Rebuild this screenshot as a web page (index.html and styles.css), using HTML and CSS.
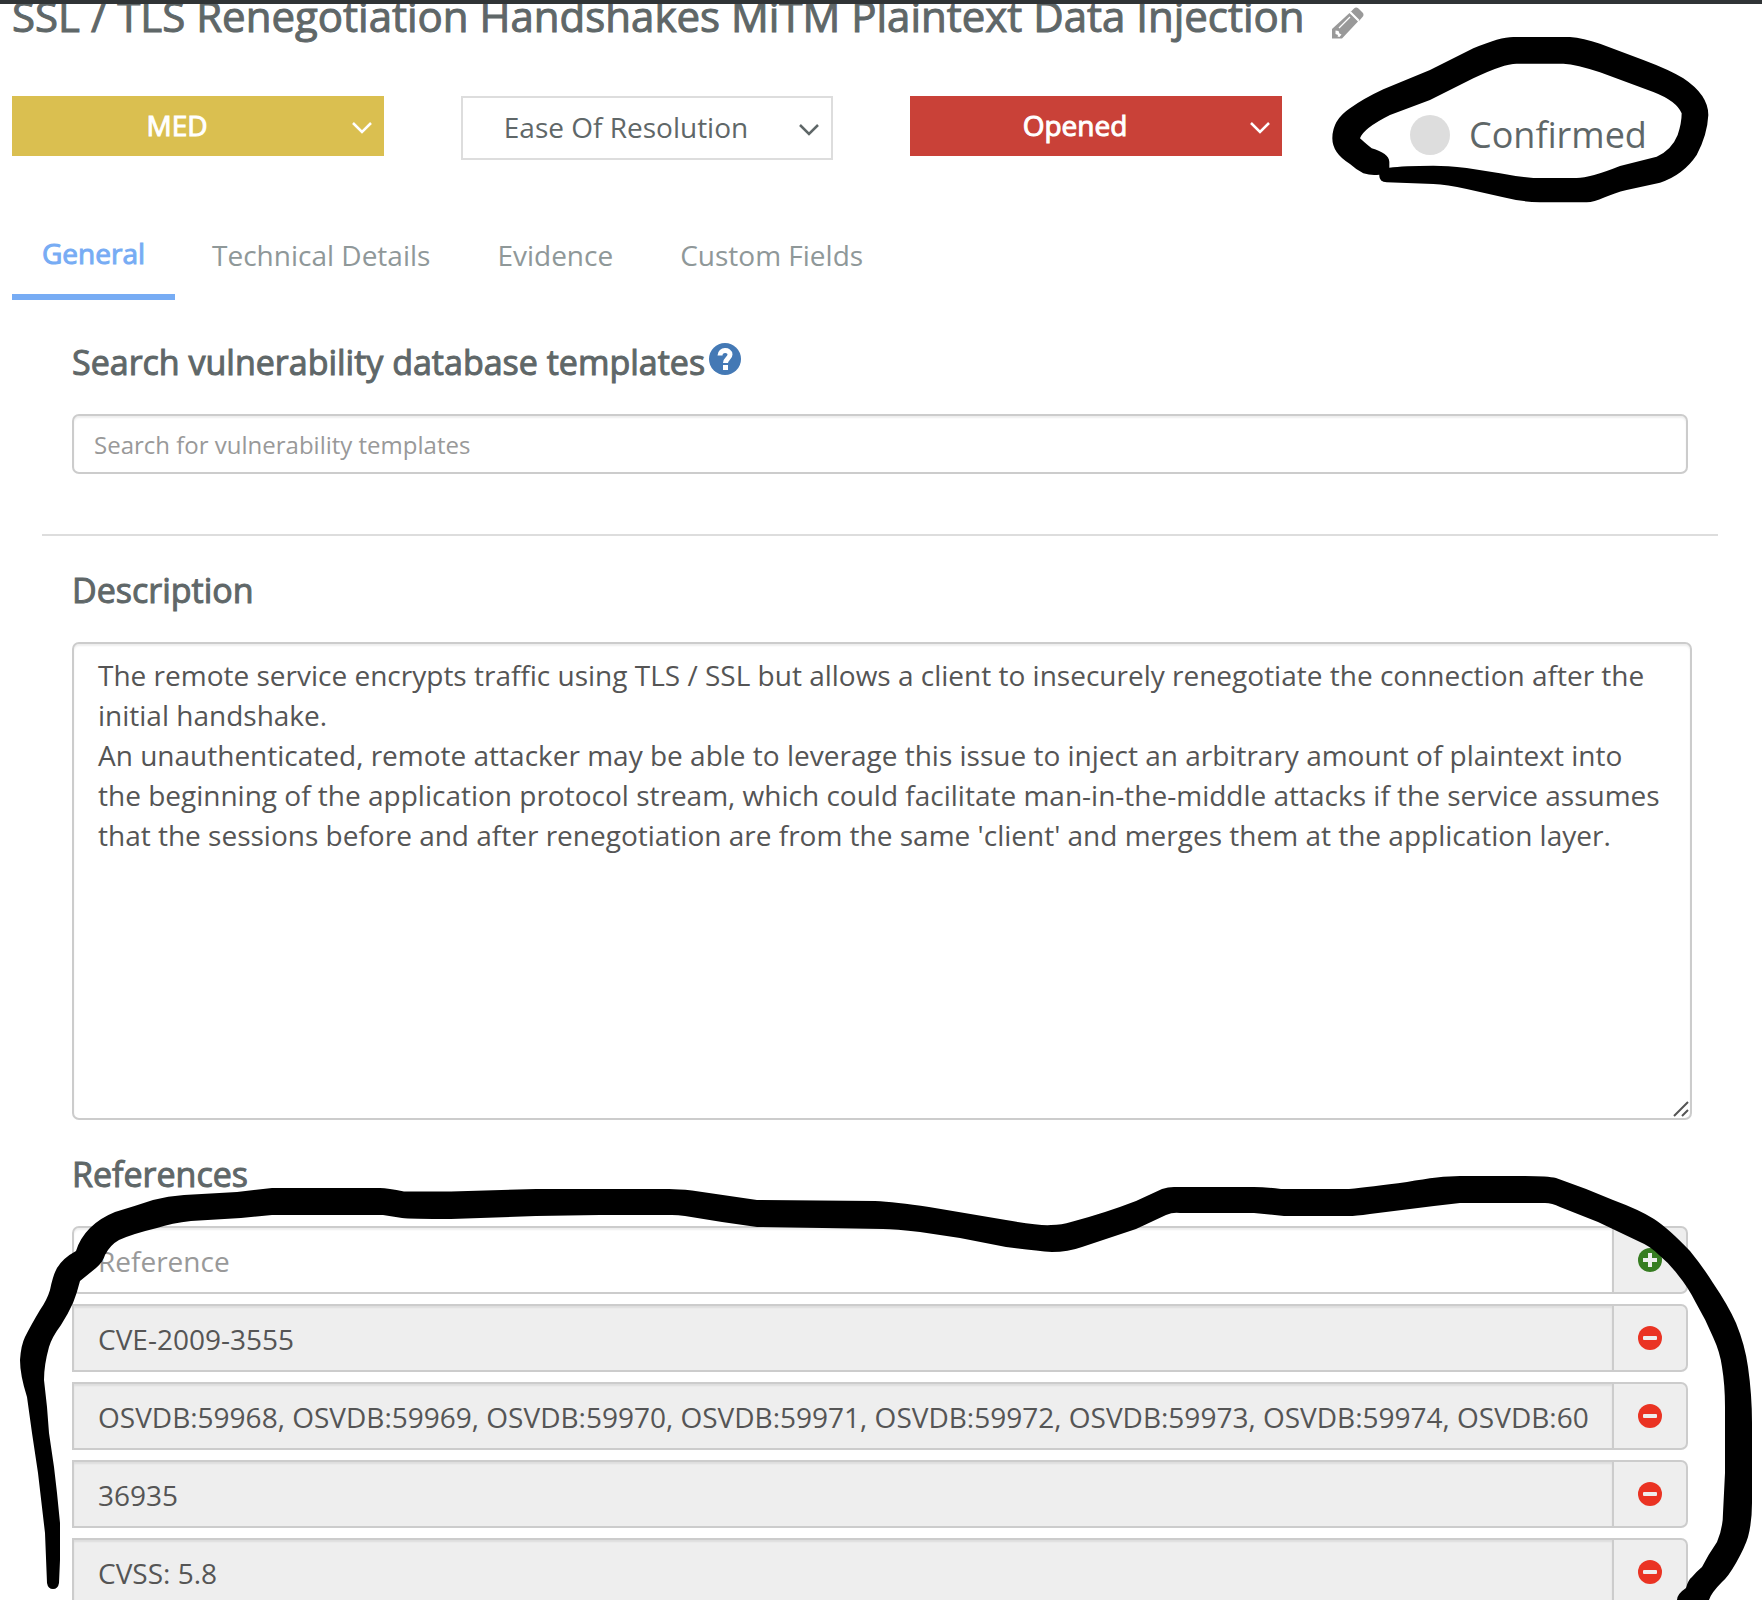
FILE: index.html
```html
<!DOCTYPE html>
<html lang="en">
<head>
<meta charset="utf-8">
<title>Vulnerability details</title>
<link rel="stylesheet" href="styles.css">
</head>
<body>
<svg width="0" height="0" class="defs" aria-hidden="true">
  <symbol id="chevron" viewBox="0 0 22 14"><path d="M2 2l9 9 9-9" fill="none" stroke="currentColor" stroke-width="2.500"/></symbol>
  <symbol id="minus" viewBox="0 0 24 24"><circle cx="12" cy="12" r="12" fill="#ea3323"/><rect x="5" y="10" width="14" height="4" rx="1" fill="#eee"/></symbol>
  <symbol id="plus" viewBox="0 0 24 24"><circle cx="12" cy="12" r="12" fill="#377d22"/><path d="M10 5h4v5h5v4h-5v5h-4v-5H5v-4h5z" fill="#eee"/></symbol>
</svg>
<main class="page">
  <header class="title-bar">
    <h1 class="title">SSL / TLS Renegotiation Handshakes MiTM Plaintext Data Injection</h1>
    <button class="edit" type="button" aria-label="Edit name">
      <svg width="32" height="32" viewBox="0 0 32 32" fill="#999"><path d="M22 1.500q2-2 4.500 0l4 4q2 2 0 4.500l-3.500 4L18.500 5zM17.500 6l8.500 8.500L10 31.500H0V22z"/><path d="M20 3.500l8.500 8.500" stroke="#fff" stroke-width="1.500" transform="translate(-1.500 1.500)"/><path d="M18 10L7 21" stroke="#fff" stroke-width="1.300"/><path d="M3.500 23.500l3 .5 1 2.500 2 1-2 2.500-2-.5.500-1.500-2.500-1z" fill="#fff"/></svg>
    </button>
  </header>

  <div class="status-row">
    <div class="dropdown dropdown-med">
      <select aria-label="Severity"><option>MED</option></select>
      <svg class="chevron"><use href="#chevron"/></svg>
    </div>
    <div class="dropdown dropdown-plain">
      <select aria-label="Ease of resolution"><option>Ease Of Resolution</option></select>
      <svg class="chevron"><use href="#chevron"/></svg>
    </div>
    <div class="dropdown dropdown-opened">
      <select aria-label="Status"><option>Opened</option></select>
      <svg class="chevron"><use href="#chevron"/></svg>
    </div>
    <label class="confirmed"><input type="checkbox"><span>Confirmed</span></label>
  </div>

  <nav class="tabs">
    <a class="tab tab-active" href="#general">General</a>
    <a class="tab" href="#technical">Technical Details</a>
    <a class="tab" href="#evidence">Evidence</a>
    <a class="tab" href="#custom">Custom Fields</a>
  </nav>

  <section class="panel search-panel">
    <h2 class="heading"><label for="search">Search vulnerability database templates</label>
      <svg width="32" height="32" viewBox="0 0 32 32" aria-hidden="true"><circle cx="16" cy="16" r="16" fill="#4479b5"/><path d="M11 12.500C11 6 21 6 21 11.500c0 4-4.500 4-4.500 8.500" fill="none" stroke="#fff" stroke-width="5"/><rect x="14" y="22" width="5" height="5" fill="#fff"/></svg>
    </h2>
    <input class="field search" id="search" type="text" placeholder="Search for vulnerability templates">
  </section>

  <hr class="rule">

  <section class="panel description-panel">
    <h2 class="heading"><label for="description">Description</label></h2>
    <div class="description-box">
      <textarea class="field description" id="description">The remote service encrypts traffic using TLS / SSL but allows a client to insecurely renegotiate the connection after the initial handshake.
An unauthenticated, remote attacker may be able to leverage this issue to inject an arbitrary amount of plaintext into the beginning of the application protocol stream, which could facilitate man-in-the-middle attacks if the service assumes that the sessions before and after renegotiation are from the same 'client' and merges them at the application layer.</textarea>
      <svg class="grip" viewBox="0 0 16 16"><path d="M1 15L15 1M9 15l6-6" stroke="#555" stroke-width="2"/></svg>
    </div>
  </section>

  <section class="panel references-panel">
    <h2 class="heading"><label for="reference">References</label></h2>
    <div class="references">
      <div class="reference reference-new"><input class="field" id="reference" type="text" placeholder="Reference"><button type="button" aria-label="Add reference"><svg width="24" height="24"><use href="#plus"/></svg></button></div>
      <div class="reference"><input class="field" type="text" readonly aria-label="Reference 1" value="CVE-2009-3555"><button type="button" aria-label="Remove reference 1"><svg width="24" height="24"><use href="#minus"/></svg></button></div>
      <div class="reference"><input class="field" type="text" readonly aria-label="Reference 2" value="OSVDB:59968, OSVDB:59969, OSVDB:59970, OSVDB:59971, OSVDB:59972, OSVDB:59973, OSVDB:59974, OSVDB:60"><button type="button" aria-label="Remove reference 2"><svg width="24" height="24"><use href="#minus"/></svg></button></div>
      <div class="reference"><input class="field" type="text" readonly aria-label="Reference 3" value="36935"><button type="button" aria-label="Remove reference 3"><svg width="24" height="24"><use href="#minus"/></svg></button></div>
      <div class="reference"><input class="field" type="text" readonly aria-label="Reference 4" value="CVSS: 5.8"><button type="button" aria-label="Remove reference 4"><svg width="24" height="24"><use href="#minus"/></svg></button></div>
    </div>
  </section>

  <!-- Hand-drawn marker strokes over the page -->
  <svg class="marker" width="1762" height="1600" viewBox="0 0 1762 1600" aria-hidden="true">
    <g transform="translate(1300 20) scale(.33333)">
      <path fill-rule="evenodd" d="M238 464Q215 468 190 460Q170 450 150 432Q97 400 97 355Q97 300 150 265Q190 236 250 208L390 150L520 85Q600 51 640 51H810Q850 54 900 71L1030 120Q1110 150 1150 175Q1225 225 1225 285Q1222 345 1190 405Q1150 465 1080 488L980 510C930 521 890 547 860 547H720Q660 545 610 532L500 507Q440 493 400 492L260 487Q236 485 238 464ZM268 443V425Q266 400 215 385Q190 365 180 355Q190 325 270 285L390 240L520 175Q610 131 650 131H790Q830 133 900 157L1060 216Q1130 243 1145 280Q1145 310 1133 345Q1115 390 1070 410L960 438Q870 474 830 474H700Q650 470 600 460L500 444Q440 437 400 437Q310 437 268 443Z"/>
    </g>
    <path d="M53 1589Q48 1589 47 1583L45 1533L38 1473L32 1433L27 1397Q20 1375 20 1360Q21 1345 25 1337Q31 1325 40 1310Q47 1300 50 1290Q53 1275 57 1268Q63 1258 76 1251Q80 1238 90 1228Q100 1218 115 1212Q135 1206 153 1200Q168 1196 184 1195L237 1192L272 1188H380Q388 1188 404 1191.500H451L536 1189H669Q678 1189 692 1190.500L757 1200L875 1201Q895 1202 929 1207L1006 1220Q1040 1226 1051 1225Q1062 1225 1071 1222Q1105 1213 1136 1201L1162 1189Q1168 1187 1174 1187H1254Q1265 1187 1281 1189H1349Q1370 1187 1407 1182Q1440 1176 1460 1176H1525Q1548 1176 1556 1178Q1585 1188 1613 1200Q1640 1210 1654 1219Q1668 1228 1690 1251Q1703 1267 1713 1283Q1728 1305 1736 1323Q1745 1345 1748 1367Q1752 1395 1752 1423V1503Q1752 1522 1748 1537Q1745 1547 1736 1563Q1728 1577 1722 1582Q1711 1593 1709 1600H1677Q1677 1594 1686 1588Q1688 1580 1692 1577Q1696 1572 1702 1567Q1708 1555 1717 1542Q1723 1528 1723 1513L1725 1473V1407Q1725 1385 1722 1367Q1720 1352 1713 1337Q1706 1320 1696 1303Q1688 1287 1678 1275Q1670 1264 1659 1255Q1650 1246 1640 1242L1598 1222L1560 1207Q1552 1203 1545 1203H1460L1434 1206L1370 1214Q1355 1216 1349 1216H1284L1254 1213H1180Q1173 1212 1166 1215L1136 1229L1082 1247Q1068 1252 1052 1252Q1035 1251 1006 1247L960 1238L920 1232Q895 1229 883 1229L757 1227L722 1222L685 1216Q678 1215 672 1215H600L536 1216L451 1219Q410 1219 402 1218L383 1215H272L241 1218L191 1221Q172 1223 157 1228Q132 1234 119 1240Q110 1245 105 1255Q103 1262 96 1268L80 1281Q77 1293 73 1303Q68 1314 61 1325Q52 1337 49 1347Q44 1365 44 1380L47 1407L49 1433L54 1467L57 1493L60 1523V1560L59 1583Q58 1589 53 1589Z"/>
  </svg>
</main>
</body>
</html>
```
FILE: styles.css
```css
* { box-sizing: border-box; }

body {
  margin: 0;
  background: #fff;
  color: #5f6768;
  font: 28px/40px "Open Sans", "Noto Sans", sans-serif;
}

.defs { display: none; }

.page {
  position: relative;
  height: 100vh;
  overflow: hidden;
  border-top: 4px solid #303436;
}

input, select, textarea, button { font: inherit; color: inherit; margin: 0; }

.title-bar {
  display: flex;
  align-items: flex-start;
  gap: 27px;
  height: 92px;
  padding-left: 12px;
}

.title {
  margin: -18px 0 0;
  font-size: 42px;
  line-height: 60px;
  font-weight: 400;
  white-space: nowrap;
  -webkit-text-stroke: 1px currentColor;
}

.edit {
  display: flex;
  padding: 3px 0 0;
  border: 0;
  background: none;
}

.status-row {
  display: grid;
  grid-template-columns: repeat(3, 1fr) 403px;
  column-gap: 77px;
  align-items: start;
  height: 136px;
  padding-left: 12px;
}

.dropdown {
  display: grid;
  grid-template-columns: 1fr 44px;
  align-items: center;
  height: 60px;
  color: #fff;
}

.dropdown select {
  grid-area: 1 / 1 / 2 / 3;
  width: 100%;
  height: 100%;
  padding: 0 42px 2px 0;
  border: 0;
  background: none;
  appearance: none;
  text-align: center;
  text-align-last: center;
}

.dropdown-med { background: #dabf50; }
.dropdown-opened { background: #c94138; }
.dropdown-med select, .dropdown-opened select { -webkit-text-stroke: 1px currentColor; }

.dropdown-plain {
  height: 64px;
  border: 2px solid #ddd;
  color: #5f6768;
}

.chevron {
  grid-area: 1 / 2 / 2 / 3;
  justify-self: center;
  width: 22px;
  height: 14px;
  margin-top: 4px;
  pointer-events: none;
}

.confirmed {
  display: flex;
  align-items: center;
  gap: 19px;
  padding: 14px 0 0 51px;
  font-size: 36px;
  line-height: 50px;
}

.confirmed input {
  appearance: none;
  width: 40px;
  height: 40px;
  border-radius: 50%;
  background: #ddd;
}

.tabs {
  display: flex;
  gap: 7px;
  height: 68px;
  padding-left: 12px;
}

.tab {
  padding: 3px 30px 0;
  color: #8f9899;
  text-decoration: none;
}

.tab-active {
  padding-top: 1px;
  border-bottom: 6px solid #77acf4;
  color: #77acf4;
  -webkit-text-stroke: 1px currentColor;
}

.panel { padding: 0 74px 0 72px; }

.heading {
  display: flex;
  align-items: center;
  gap: 4px;
  margin: 0;
  font-size: 34px;
  line-height: 46px;
  font-weight: 400;
  -webkit-text-stroke: 1px currentColor;
}

.heading svg { margin-bottom: 6px; -webkit-text-stroke: 0; }

.field {
  display: block;
  width: 100%;
  border: 2px solid #ccc;
  border-radius: 7px;
  background: #fff;
  color: #555;
  box-shadow: inset 0 2px 2px rgba(0, 0, 0, .07);
}

.field::placeholder { color: #999; opacity: 1; }

.search-panel { padding-top: 39px; }

.search {
  height: 60px;
  margin-top: 29px;
  padding: 0 20px;
  font-size: 24px;
}

.rule {
  height: 2px;
  margin: 60px 44px 0 42px;
  border: 0;
  background: #ddd;
}

.description-panel { padding: 31px 70px 0 72px; }
.description-box { position: relative; margin-top: 29px; }

.description {
  height: 478px;
  padding: 11px 24px;
  line-height: 40px;
  resize: none;
}

.grip {
  position: absolute;
  right: 3px;
  bottom: 3px;
  width: 16px;
  height: 16px;
}

.references-panel { padding-top: 31px; }

.references {
  display: flex;
  flex-direction: column;
  gap: 10px;
  margin-top: 29px;
}

.reference { display: flex; height: 68px; }

.reference .field {
  flex: 1;
  min-width: 0;
  padding: 2px 24px 0;
  border-radius: 0;
  background: #eee;
}

.reference-new .field { border-radius: 7px 0 0 7px; background: #fff; }

.reference button {
  display: flex;
  align-items: center;
  justify-content: center;
  width: 74px;
  padding: 0;
  border: 2px solid #ccc;
  border-left: 0;
  border-radius: 0 7px 7px 0;
  background: #eee;
}

.marker {
  position: absolute;
  top: -4px;
  left: 0;
  pointer-events: none;
}
```
